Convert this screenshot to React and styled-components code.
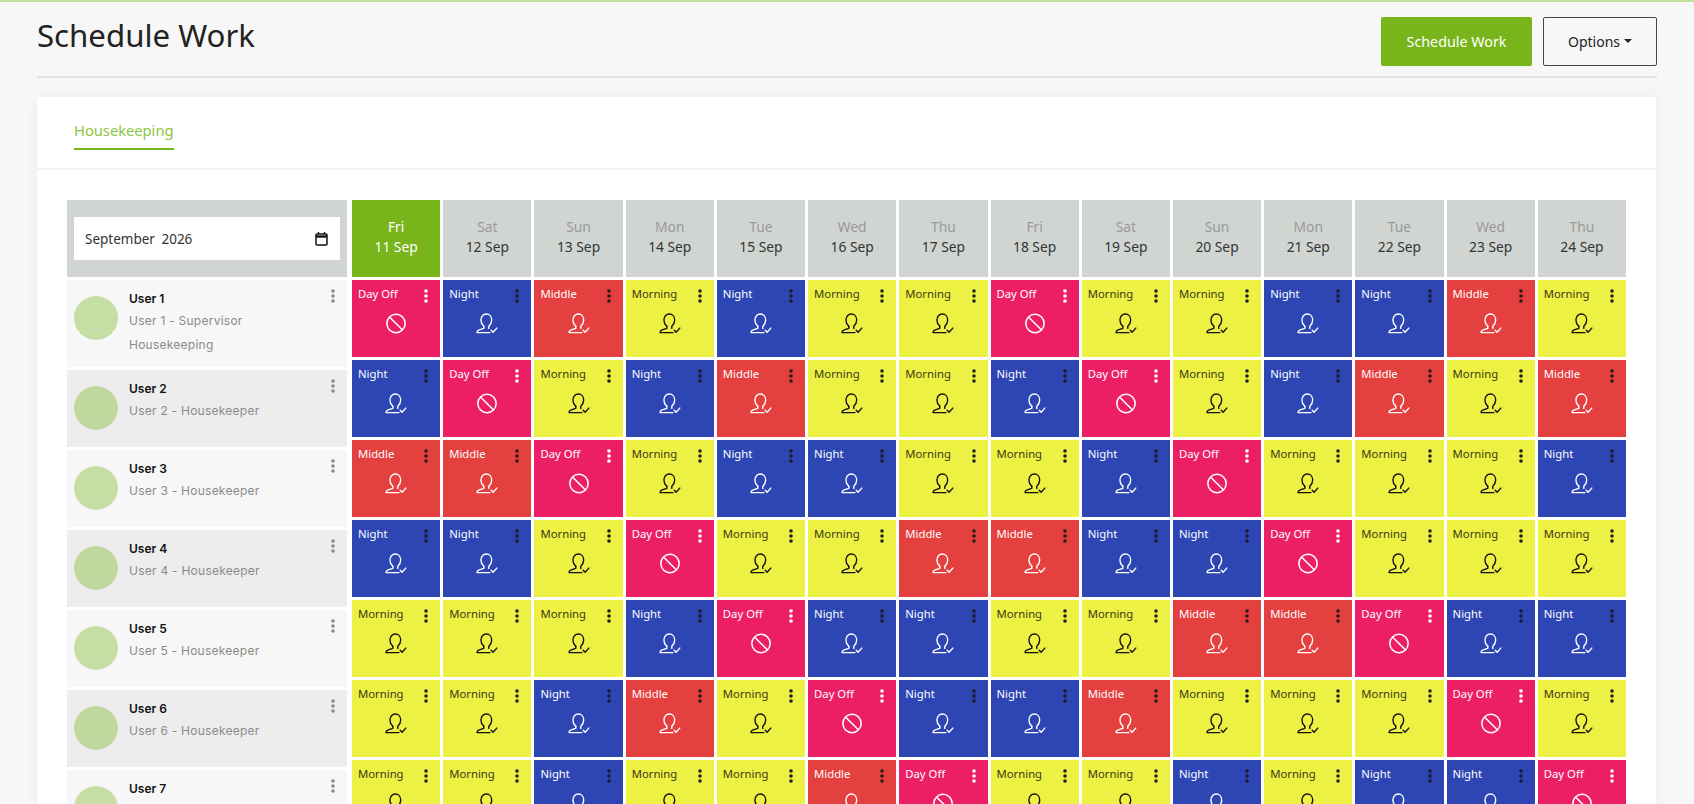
import React from 'react';
import styled, { createGlobalStyle } from 'styled-components';

const GlobalStyle = createGlobalStyle`
  html, body {
    margin: 0;
    height: 100%;
    overflow: hidden;
    background: #f7f7f7;
  }
  * {
    box-sizing: border-box;
  }
`;

const HEAD_FONT = `"Noto Sans", "Open Sans", sans-serif`;
const USER_FONT = `Inter, "Noto Sans", sans-serif`;

const shiftColors = {
  Morning: { bg: '#edf143', text: '#3a3a1a', icon: '#111', dots: '#222' },
  Night: { bg: '#2e46b3', text: '#fff', icon: '#fff', dots: '#1c1c2c' },
  Middle: { bg: '#e44040', text: '#fff', icon: '#fff', dots: '#2a1a1a' },
  'Day Off': { bg: '#ec1f66', text: '#fff', icon: '#fff', dots: '#fff' },
};

const Page = styled.div`
  height: 804px;
  overflow: hidden;
  border-top: 2px solid #c2de9b;
`;

const TopBar = styled.div`
  display: flex;
  align-items: flex-start;
  justify-content: space-between;
  height: 76px;
  margin: 0 37px 19px;
  padding-top: 15px;
  border-bottom: 2px solid #e3e3e3;
`;

const Title = styled.h1`
  margin: 0;
  font-family: ${HEAD_FONT};
  font-size: 31.2px;
  font-weight: 400;
  line-height: 36px;
  color: #222;
`;

const Actions = styled.div`
  display: flex;
  gap: 11px;
`;

const PrimaryButton = styled.button`
  width: 151px;
  height: 49px;
  border: none;
  border-radius: 2px;
  background: #77b51b;
  color: #fff;
  font-family: ${HEAD_FONT};
  font-size: 14.3px;
`;

const OptionsButton = styled.button`
  display: flex;
  align-items: center;
  justify-content: center;
  gap: 4px;
  width: 114px;
  height: 49px;
  border: 1px solid #444;
  border-radius: 2px;
  background: transparent;
  color: #222;
  font-family: ${HEAD_FONT};
  font-size: 14px;

  &::after {
    content: '';
    border-top: 4px solid #222;
    border-left: 4px solid transparent;
    border-right: 4px solid transparent;
    margin-bottom: 2px;
  }
`;

const Card = styled.div`
  margin: 0 38px 0 37px;
  background: #fff;
  box-shadow: 0 0 14px rgba(0, 0, 0, 0.05);
`;

const TabBar = styled.div`
  display: flex;
  height: 73px;
  padding: 23px 0 0 37px;
  border-bottom: 2px solid #f3f3f3;
`;

const Tab = styled.div`
  height: 30px;
  padding-bottom: 6px;
  border-bottom: 2px solid #77b51b;
  font-family: ${HEAD_FONT};
  font-size: 14.7px;
  line-height: 20px;
  color: #8cc63f;
`;

const Content = styled.div`
  display: flex;
  gap: 5px;
  padding: 30px;
`;

const Sidebar = styled.div`
  display: flex;
  flex-direction: column;
  gap: 3px;
  width: 280px;
  flex-shrink: 0;
`;

const MonthBox = styled.div`
  display: flex;
  align-items: center;
  height: 77px;
  padding: 0 7px;
  background: #d1d5d2;
`;

const MonthField = styled.div`
  display: flex;
  align-items: center;
  justify-content: space-between;
  width: 100%;
  height: 43px;
  padding: 0 12px 0 11px;
  background: #fff;
  color: #333;
  font-family: ${HEAD_FONT};
  font-size: 13.5px;
  word-spacing: 3px;
`;

const UserRow = styled.div`
  position: relative;
  display: flex;
  gap: 11px;
  height: ${(p) => (p.$tall ? '87px' : '77px')};
  padding: 16px 7px 0;
  background: ${(p) => (p.$even ? '#ededed' : '#f7f7f7')};
`;

const Avatar = styled.div`
  width: 44px;
  height: 44px;
  flex-shrink: 0;
  border-radius: 50%;
  background: rgba(119, 181, 27, 0.38);
`;

const UserInfo = styled.div`
  margin-top: -5px;
  font-family: ${USER_FONT};
`;

const UserName = styled.div`
  font-size: 12px;
  font-weight: 600;
  line-height: 16px;
  color: #111;
`;

const UserRole = styled.div`
  margin-top: 3px;
  font-size: 12px;
  line-height: 21px;
  letter-spacing: 0.25px;
  color: #8a8a8a;
`;

const UserMenu = styled.svg`
  position: absolute;
  top: 9px;
  right: 12px;
  color: #8a8a8a;
`;

const DayGrid = styled.div`
  flex: 1;
  display: grid;
  grid-template-columns: repeat(14, 1fr);
  grid-auto-rows: 77px;
  gap: 3px;
`;

const DayHead = styled.div`
  display: flex;
  flex-direction: column;
  align-items: center;
  justify-content: center;
  padding-bottom: 4px;
  background: ${(p) => (p.$active ? '#77b51b' : '#d1d5d2')};
  font-family: ${HEAD_FONT};
  font-size: 13.8px;
  line-height: 20px;
`;

const DayName = styled.span`
  color: ${(p) => (p.$active ? '#fff' : '#999')};
`;

const DayDate = styled.span`
  color: ${(p) => (p.$active ? '#fff' : '#333')};
`;

const ShiftCell = styled.div`
  display: flex;
  flex-direction: column;
  align-items: center;
  padding: 6px 6px 0;
  background: ${(p) => shiftColors[p.$shift].bg};
  color: ${(p) => shiftColors[p.$shift].icon};
`;

const CellHead = styled.div`
  display: flex;
  align-items: flex-start;
  justify-content: space-between;
  width: 100%;
  height: 24px;
  margin-bottom: 3px;
`;

const ShiftLabel = styled.span`
  font-family: ${HEAD_FONT};
  font-size: 11.3px;
  font-weight: 400;
  line-height: 16px;
  color: ${(p) => shiftColors[p.$shift].text};
`;

const CellMenu = styled.svg`
  margin: 3px 6px 0 0;
  color: ${(p) => shiftColors[p.$shift].dots};
`;

const Dots = (props) => (
  <svg width="4" height="14" viewBox="0 0 4 14" fill="currentColor" {...props}>
    <circle cx="2" cy="2" r="1.8" />
    <circle cx="2" cy="7" r="1.8" />
    <circle cx="2" cy="12" r="1.8" />
  </svg>
);

const CalendarIcon = () => (
  <svg width="13" height="14" viewBox="0 0 13 14" fill="none" stroke="#111">
    <path d="M3.5 0v2M9.5 0v2" strokeWidth="1.4" />
    <rect x="1" y="2" width="11" height="11" rx="1" strokeWidth="1.5" />
    <path d="M1 4.5h11" strokeWidth="2.4" />
  </svg>
);

const PersonIcon = () => (
  <svg width="22" height="21" viewBox="0 0 22 21" fill="none" stroke="currentColor" strokeWidth="1.4" strokeLinecap="round" strokeLinejoin="round">
    <path d="M7.8 13.2C6 11.6 4.9 9.4 4.9 7 4.9 3.4 7.3 1 10.3 1s5.4 2.4 5.4 6c0 2.4-1.1 4.6-2.9 6.2v2.2" />
    <path d="M7.8 13.2v2.1l-4.6 1.6C1.7 17.4 1 18.3 1 19.6h13" />
    <path d="M15.2 17.2l1.9 2.1 3.7-4.2" />
  </svg>
);

const BanIcon = () => (
  <svg width="22" height="21" viewBox="0 0 22 22" fill="none" stroke="currentColor" strokeWidth="1.6">
    <circle cx="11" cy="11" r="9.6" />
    <path d="M4.4 4.4l13.2 13.2" />
  </svg>
);

const days = [
  ['Fri', 11], ['Sat', 12], ['Sun', 13], ['Mon', 14], ['Tue', 15], ['Wed', 16], ['Thu', 17],
  ['Fri', 18], ['Sat', 19], ['Sun', 20], ['Mon', 21], ['Tue', 22], ['Wed', 23], ['Thu', 24],
];

const users = [
  { name: 'User 1', roles: ['User 1 - Supervisor', 'Housekeeping'] },
  { name: 'User 2', roles: ['User 2 - Housekeeper'] },
  { name: 'User 3', roles: ['User 3 - Housekeeper'] },
  { name: 'User 4', roles: ['User 4 - Housekeeper'] },
  { name: 'User 5', roles: ['User 5 - Housekeeper'] },
  { name: 'User 6', roles: ['User 6 - Housekeeper'] },
  { name: 'User 7', roles: [] },
];

const M = 'Morning';
const N = 'Night';
const I = 'Middle';
const D = 'Day Off';

const schedule = [
  [D, N, I, M, N, M, M, D, M, M, N, N, I, M],
  [N, D, M, N, I, M, M, N, D, M, N, I, M, I],
  [I, I, D, M, N, N, M, M, N, D, M, M, M, N],
  [N, N, M, D, M, M, I, I, N, N, D, M, M, M],
  [M, M, M, N, D, N, N, M, M, I, I, D, N, N],
  [M, M, N, I, M, D, N, N, I, M, M, M, D, M],
  [M, M, N, M, M, I, D, M, M, N, M, N, N, D],
];

const App = () => (
  <Page>
    <GlobalStyle />
    <TopBar>
      <Title>Schedule Work</Title>
      <Actions>
        <PrimaryButton>Schedule Work</PrimaryButton>
        <OptionsButton>Options</OptionsButton>
      </Actions>
    </TopBar>
    <Card>
      <TabBar>
        <Tab>Housekeeping</Tab>
      </TabBar>
      <Content>
        <Sidebar>
          <MonthBox>
            <MonthField>
              <span>September 2026</span>
              <CalendarIcon />
            </MonthField>
          </MonthBox>
          {users.map((user, index) => (
            <UserRow key={user.name} $tall={index === 0} $even={index % 2 === 1}>
              <Avatar />
              <UserInfo>
                <UserName>{user.name}</UserName>
                {user.roles.map((role) => <UserRole key={role}>{role}</UserRole>)}
              </UserInfo>
              <UserMenu as={Dots} />
            </UserRow>
          ))}
        </Sidebar>
        <DayGrid>
          {days.map(([name, date], index) => (
            <DayHead key={date} $active={index === 0}>
              <DayName $active={index === 0}>{name}</DayName>
              <DayDate $active={index === 0}>{date} Sep</DayDate>
            </DayHead>
          ))}
          {schedule.flat().map((shift, index) => (
            <ShiftCell key={index} $shift={shift}>
              <CellHead>
                <ShiftLabel $shift={shift}>{shift}</ShiftLabel>
                <CellMenu as={Dots} $shift={shift} />
              </CellHead>
              {shift === D ? <BanIcon /> : <PersonIcon />}
            </ShiftCell>
          ))}
        </DayGrid>
      </Content>
    </Card>
  </Page>
);

export default App;
